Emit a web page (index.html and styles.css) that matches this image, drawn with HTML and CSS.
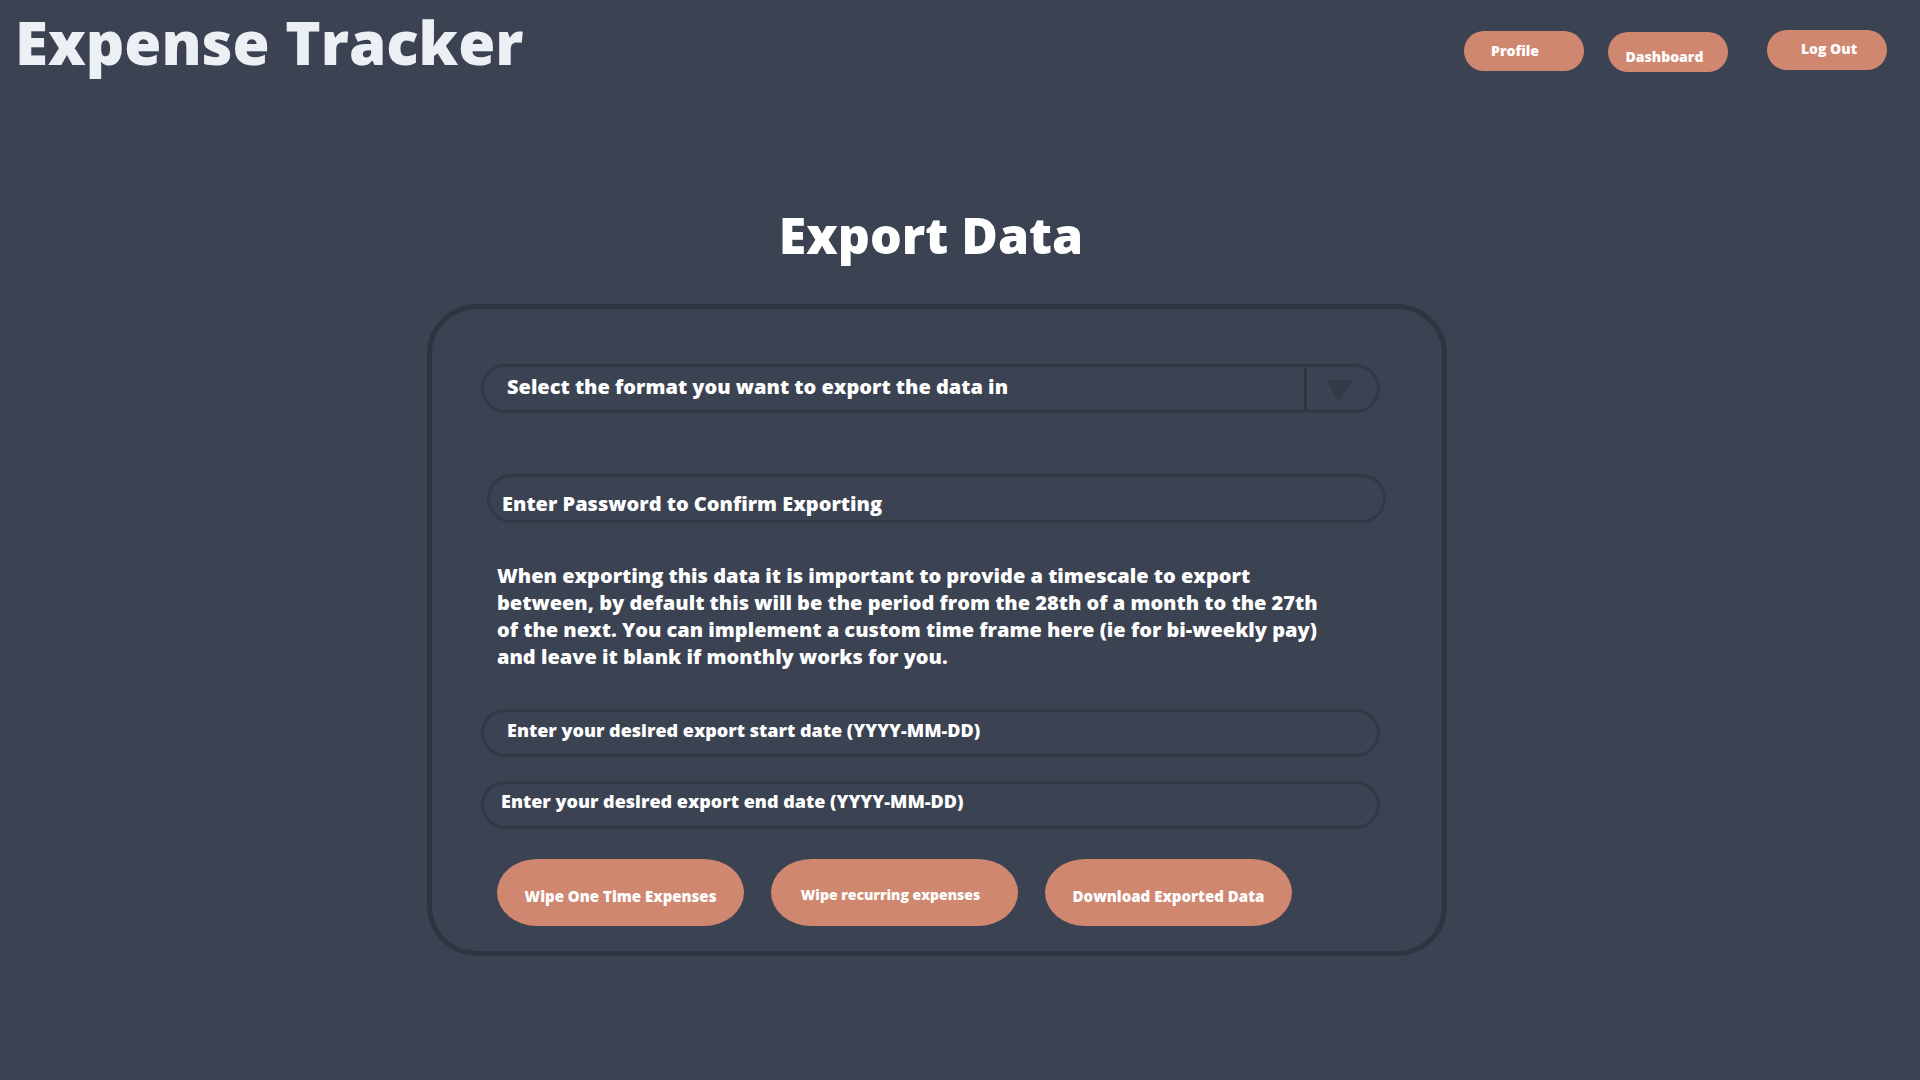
FILE: index.html
```html
<!DOCTYPE html>
<html lang="en">
<head>
<meta charset="utf-8">
<title>Expense Tracker - Export Data</title>
<link rel="stylesheet" href="styles.css">
</head>
<body>
<header class="topbar">
  <h1 class="brand">Expense Tracker</h1>
  <nav class="nav">
    <a class="nav-btn nav-btn--profile" href="#">Profile</a>
    <a class="nav-btn nav-btn--dashboard" href="#">Dashboard</a>
    <a class="nav-btn nav-btn--logout" href="#">Log Out</a>
  </nav>
</header>
<main class="main">
  <h2 class="page-title">Export Data</h2>
  <section class="card">
    <div class="select">
      <span class="select-label">Select the format you want to export the data in</span>
      <span class="select-arrow"><svg width="26" height="22" viewBox="0 0 26 22"><path d="M0 0 H26 L13 22 Z" fill="#343a48"/></svg></span>
    </div>
    <input class="field field--password" type="password" placeholder="Enter Password to Confirm Exporting">
    <p class="info">When exporting this data it is important to provide a timescale to export between, by default this will be the period from the 28th of a month to the 27th of the next. You can implement a custom time frame here (ie for bi-weekly pay) and leave it blank if monthly works for you.</p>
    <input class="field field--date field--start" type="text" placeholder="Enter your desired export start date (YYYY-MM-DD)">
    <input class="field field--date field--end" type="text" placeholder="Enter your desired export end date (YYYY-MM-DD)">
    <div class="actions">
      <button class="action-btn">Wipe One Time Expenses</button>
      <button class="action-btn action-btn--raised">Wipe recurring expenses</button>
      <button class="action-btn">Download Exported Data</button>
    </div>
  </section>
</main>
</body>
</html>
```
FILE: styles.css
```css
* { box-sizing: border-box; }
html, body { margin: 0; padding: 0; }
body {
  background: #3b4252;
  color: #eceff4;
  font-family: "Open Sans", "Liberation Sans", sans-serif;
  font-weight: 800;
  min-height: 1080px;
}
.topbar {
  display: flex;
  justify-content: space-between;
  align-items: flex-start;
  padding: 0 33px 0 15px;
}
.brand {
  margin: 0;
  font-size: 60px;
  font-weight: 800;
  line-height: 84px;
  color: #eceff4;
}
.nav {
  display: flex;
  align-items: flex-start;
}
.nav-btn {
  display: flex;
  align-items: center;
  justify-content: center;
  width: 120px;
  height: 40px;
  border-radius: 20px;
  background: #d08770;
  color: #fff;
  font-size: 14px;
  font-weight: 800;
  text-decoration: none;
}
.nav-btn--profile { margin-top: 31px; padding: 0 18px 1px 0; }
.nav-btn--dashboard { margin: 32px 0 0 24px; padding: 9px 7px 0 0; }
.nav-btn--logout { margin: 30px 0 0 39px; padding: 0 0 4px 4px; }

.main {
  display: flex;
  flex-direction: column;
  align-items: center;
  padding: 119px 46px 0 0;
}
.page-title {
  margin: 0 12px 36px 0;
  font-size: 50px;
  font-weight: 800;
  line-height: 65px;
  color: #fff;
}
.card {
  width: 1020px;
  border: 5px solid #2e3440;
  border-radius: 50px;
  padding: 55px 0 25px 49px;
  display: flex;
  flex-direction: column;
  align-items: flex-start;
}
.select {
  width: 899px;
  height: 49px;
  border: 3px solid #323846;
  border-radius: 25px;
  display: flex;
  align-items: stretch;
}
.select-label {
  flex: 1;
  display: flex;
  align-items: center;
  padding: 0 0 4px 23px;
  font-size: 20px;
  color: #fff;
}
.select-arrow {
  width: 73px;
  border-left: 3px solid #2e3440;
  display: flex;
  align-items: center;
  justify-content: center;
  padding: 4px 7px 0 0;
  margin-top: 1px;
}
.field {
  display: block;
  width: 899px;
  height: 49px;
  border: 3px solid #323846;
  border-radius: 25px;
  background: transparent;
  font-family: "Open Sans", "Liberation Sans", sans-serif;
  font-weight: 800;
  font-size: 20px;
  color: #fff;
  outline: none;
}
.field::placeholder { color: #fff; opacity: 1; }
.field--password { margin: 61px 0 0 6px; padding: 9px 0 0 12px; }
.field--date { font-size: 18px; height: 48px; }
.field--start { margin-top: 39px; padding: 0 0 6px 23px; }
.field--end { margin-top: 24px; padding: 0 0 9px 17px; }
.info {
  margin: 39px 0 0 16px;
  width: 834px;
  font-size: 20px;
  line-height: 27px;
  color: #fff;
}
.actions {
  display: flex;
  gap: 27px;
  margin: 30px 0 0 16px;
}
.action-btn {
  width: 247px;
  height: 67px;
  border: none;
  border-radius: 48px / 40px;
  background: #d08770;
  color: #fff;
  font-family: "Open Sans", "Liberation Sans", sans-serif;
  font-weight: 800;
  font-size: 15px;
  padding: 6px 0 0;
}
.action-btn--raised { font-size: 14px; padding: 4px 8px 0 0; }
```
